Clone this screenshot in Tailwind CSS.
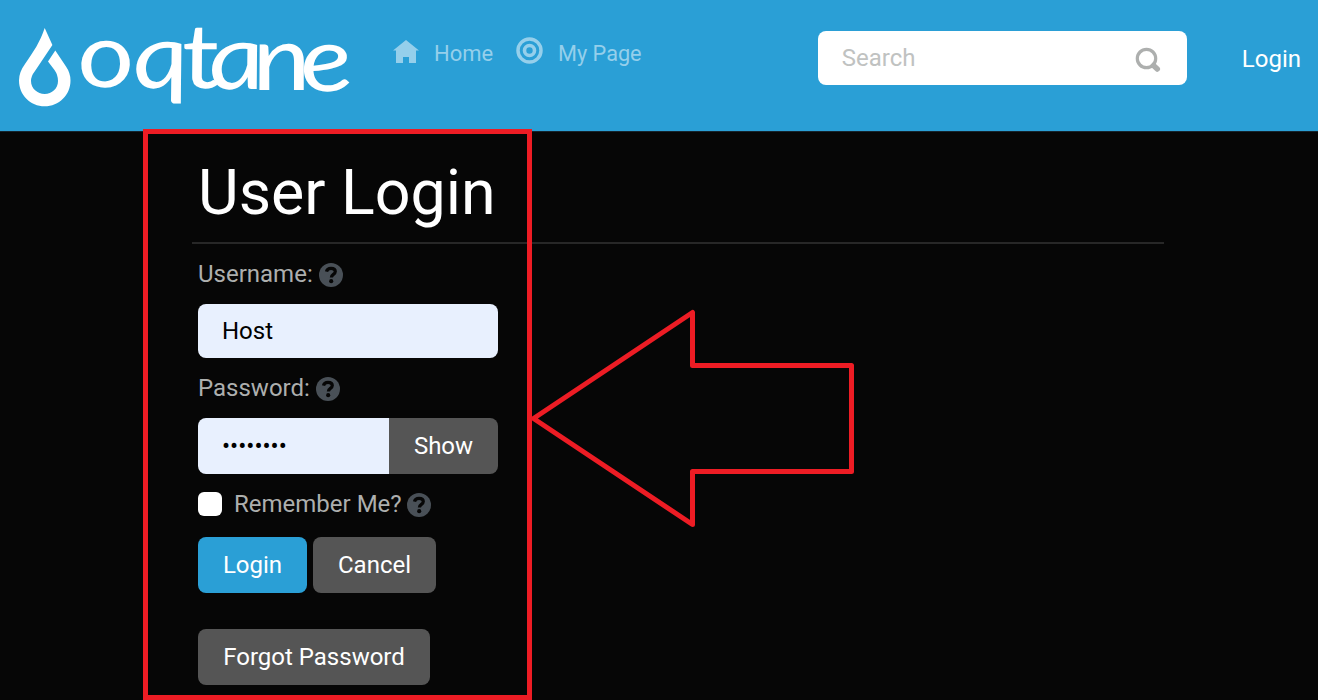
<!DOCTYPE html>
<html lang="en">
<head>
<meta charset="utf-8">
<title>User Login</title>
<script src="https://cdn.jsdelivr.net/npm/@tailwindcss/browser@4"></script>
</head>
<body class="relative h-[700px] w-[1318px] overflow-hidden bg-[#060606] font-[Roboto,sans-serif] text-2xl leading-9 text-[#adafae]">
<svg class="hidden">
  <symbol id="help" viewBox="0 0 24 24">
    <circle cx="12" cy="12" r="12" fill="#495057"/>
    <path d="M7.500 8.700C8 6.300 9.800 5.400 12 5.400c2.600 0 4.300 1.200 4.300 3.100 0 3-3.900 2.700-3.900 5.900" fill="none" stroke="#060606" stroke-width="3.200"/>
    <circle cx="12.200" cy="18.200" r="2.100" fill="#060606"/>
  </symbol>
</svg>

<header class="flex h-[132px] items-start border-b border-[#15242d] bg-[#2a9fd6]">
  <svg class="ml-[14px] h-[131px] w-[346px] shrink-0 overflow-visible" viewBox="14 0 346 131" role="img">
    <path fill="#fff" fill-rule="evenodd" d="M44.7 28L52.4 45L35 71Q31 76 31 81C31 88.5 37.5 94 44.7 94S58 88.5 58 81Q58 75 54.5 70L48 61.5L55.3 50.5L66 66.5Q70.5 73 70.5 80.500C70.500 95 59 106.300 44.700 106.300S19 95 19 80.500Q19 72 25 64C34 51 40 42 44.700 28Z"/>
    <text fill="#fff" font-family="Lato, sans-serif" font-style="italic" font-size="90" transform="translate(0 88) skewX(8) scale(1.22 1)" y="-1 0 0 1 2 3" x="66.600 111.500 152.500 173.500 209.800 248.400">oqtane</text>
  </svg>
  <nav class="ml-[33px] mt-[35px] flex">
    <a class="flex w-[123px] text-[#95cfeb]">
      <svg class="mt-[5px] h-[24px] w-[26px]" viewBox="0 0 26 24" fill="currentColor"><path d="M13 0L26 10.500H23V23H16V17H10V23H3V10.500H0Z"/></svg>
      <span class="ml-[15px] mt-px text-[22px] leading-9">Home</span>
    </a>
    <a class="flex text-[#95cfeb]">
      <svg class="mt-[2px] h-[27px] w-[27px]" viewBox="0 0 27 27" fill="none" stroke="currentColor"><circle cx="13.500" cy="13.500" r="11.500" stroke-width="3.500"/><circle cx="13.500" cy="13.500" r="5" stroke-width="3.600"/></svg>
      <span class="ml-[15px] mt-px whitespace-nowrap text-[21.700px] leading-9">My Page</span>
    </a>
  </nav>
  <div class="ml-auto mt-[31px] flex h-[54px] w-[369px] items-center justify-between rounded-lg bg-white px-6 text-[#c0c2c1]">
    <span>Search</span>
    <svg class="mr-[2px] mt-[3px] h-[26px] w-[26px]" viewBox="0 0 26 26" fill="none" stroke="#adafae"><circle cx="11.500" cy="11.500" r="9.200" stroke-width="3.200"/><path d="M18.500 18.500L22.300 22" stroke-width="5.500" stroke-linecap="round"/></svg>
  </div>
  <a class="ml-[55px] mr-[17px] mt-[41px] text-white">Login</a>
</header>

<main class="ml-[192px] w-[972px]">
  <h1 class="h-[110px] pl-[6px] pt-[22px] text-[62.700px] leading-[77px] text-white">User Login</h1>
  <hr class="border-t-2 border-[#272727]">
  <form class="flex w-[306px] flex-col pl-[6px]">
    <label class="mt-[12px] flex h-9 items-center gap-[6px]">Username: <svg class="mt-[2px] size-6"><use href="#help"/></svg></label>
    <input class="mt-[12px] h-[54px] rounded-lg bg-[#e8f0fe] px-6 text-black" value="Host">
    <label class="mt-[12px] flex h-9 items-center gap-[6px]">Password: <svg class="mt-[2px] size-6"><use href="#help"/></svg></label>
    <div class="mt-[12px] flex h-[56px]">
      <input type="password" class="w-[191px] rounded-l-lg bg-[#e8f0fe] px-6 text-black" value="password">
      <button type="button" class="flex-1 rounded-r-lg bg-[#555] text-white">Show</button>
    </div>
    <label class="mt-[12px] flex h-9 items-center whitespace-nowrap"><span class="mr-3 size-6 rounded-md bg-white"></span>Remember Me? <svg class="ml-[5px] mt-[2px] size-6"><use href="#help"/></svg></label>
    <div class="mt-[15px] flex h-[56px] gap-[6px]">
      <button type="button" class="w-[109px] rounded-lg bg-[#2a9fd6] text-white">Login</button>
      <button type="button" class="w-[123px] rounded-lg bg-[#555] text-white">Cancel</button>
    </div>
    <button type="button" class="mt-[36px] h-[56px] w-[232px] rounded-lg bg-[#555] text-white">Forgot Password</button>
  </form>
</main>

<!-- Callout frame and arrow over the form -->
<div class="pointer-events-none absolute left-[143px] top-[129px] h-[571px] w-[389px] border-5 border-[#ed1c24]"></div>
<svg class="pointer-events-none absolute left-0 top-0 h-[700px] w-[1318px]" fill="none" stroke="#ed1c24" stroke-width="5" stroke-linejoin="round"><path d="M533.500 418.500L692.500 312.500V365.500H851.500V471.500H692.500V524.500Z"/></svg>
</body>
</html>
